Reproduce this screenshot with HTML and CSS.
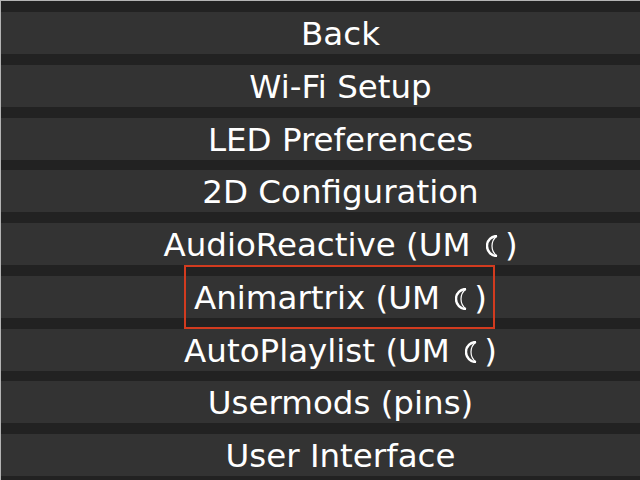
FILE: index.html
```html
<!DOCTYPE html>
<html lang="en">
<head>
<meta charset="utf-8">
<title>Settings</title>
<link rel="stylesheet" href="styles.css">
</head>
<body>
<div class="frame">
  <nav class="menu">
    <button class="btn">Back</button>
    <button class="btn">Wi-Fi Setup</button>
    <button class="btn">LED Preferences</button>
    <button class="btn">2D Configuration</button>
    <button class="btn">AudioReactive (UM <svg class="moon" viewBox="0 0 12 22" aria-label="moon"><path class="outer" d="M11 1 A10 10 0 0 0 11 21"/><path class="inner" d="M11 1 A12.5 12.5 0 0 0 11 21"/></svg>)</button>
    <button class="btn">Animartrix (UM <svg class="moon" viewBox="0 0 12 22" aria-label="moon"><path class="outer" d="M11 1 A10 10 0 0 0 11 21"/><path class="inner" d="M11 1 A12.5 12.5 0 0 0 11 21"/></svg>)</button>
    <button class="btn">AutoPlaylist (UM <svg class="moon" viewBox="0 0 12 22" aria-label="moon"><path class="outer" d="M11 1 A10 10 0 0 0 11 21"/><path class="inner" d="M11 1 A12.5 12.5 0 0 0 11 21"/></svg>)</button>
    <button class="btn">Usermods (pins)</button>
    <button class="btn">User Interface</button>
  </nav>
  <div class="highlight"></div>
</div>
</body>
</html>
```
FILE: styles.css
```css
html, body {
  margin: 0;
  padding: 0;
  background: #222;
}
.frame {
  position: relative;
  height: 479px;
  border-top: 1px solid #b4b4b4;
  border-left: 1px solid #b4b4b4;
  background: #222;
  overflow: hidden;
}
.menu {
  display: flex;
  flex-direction: column;
  gap: 10.75px;
  padding-top: 11px;
}
.btn {
  box-sizing: border-box;
  height: 42px;
  margin: 0;
  padding: 2px 0 0 40px;
  border: 0;
  background: #333;
  color: #fff;
  font-family: "DejaVu Sans", Verdana, sans-serif;
  font-size: 32.5px;
  line-height: 40px;
  text-align: center;
}
.moon {
  width: 12px;
  height: 22px;
  margin-left: 5px;
  margin-right: 7px;
  vertical-align: -1px;
  fill: none;
  stroke: #fff;
}
.moon .outer {
  stroke-width: 2.4;
}
.moon .inner {
  stroke-width: 1.2;
}
.highlight {
  position: absolute;
  left: 183px;
  top: 264px;
  width: 307px;
  height: 60px;
  border: 2px solid #d23b1f;
}
```
